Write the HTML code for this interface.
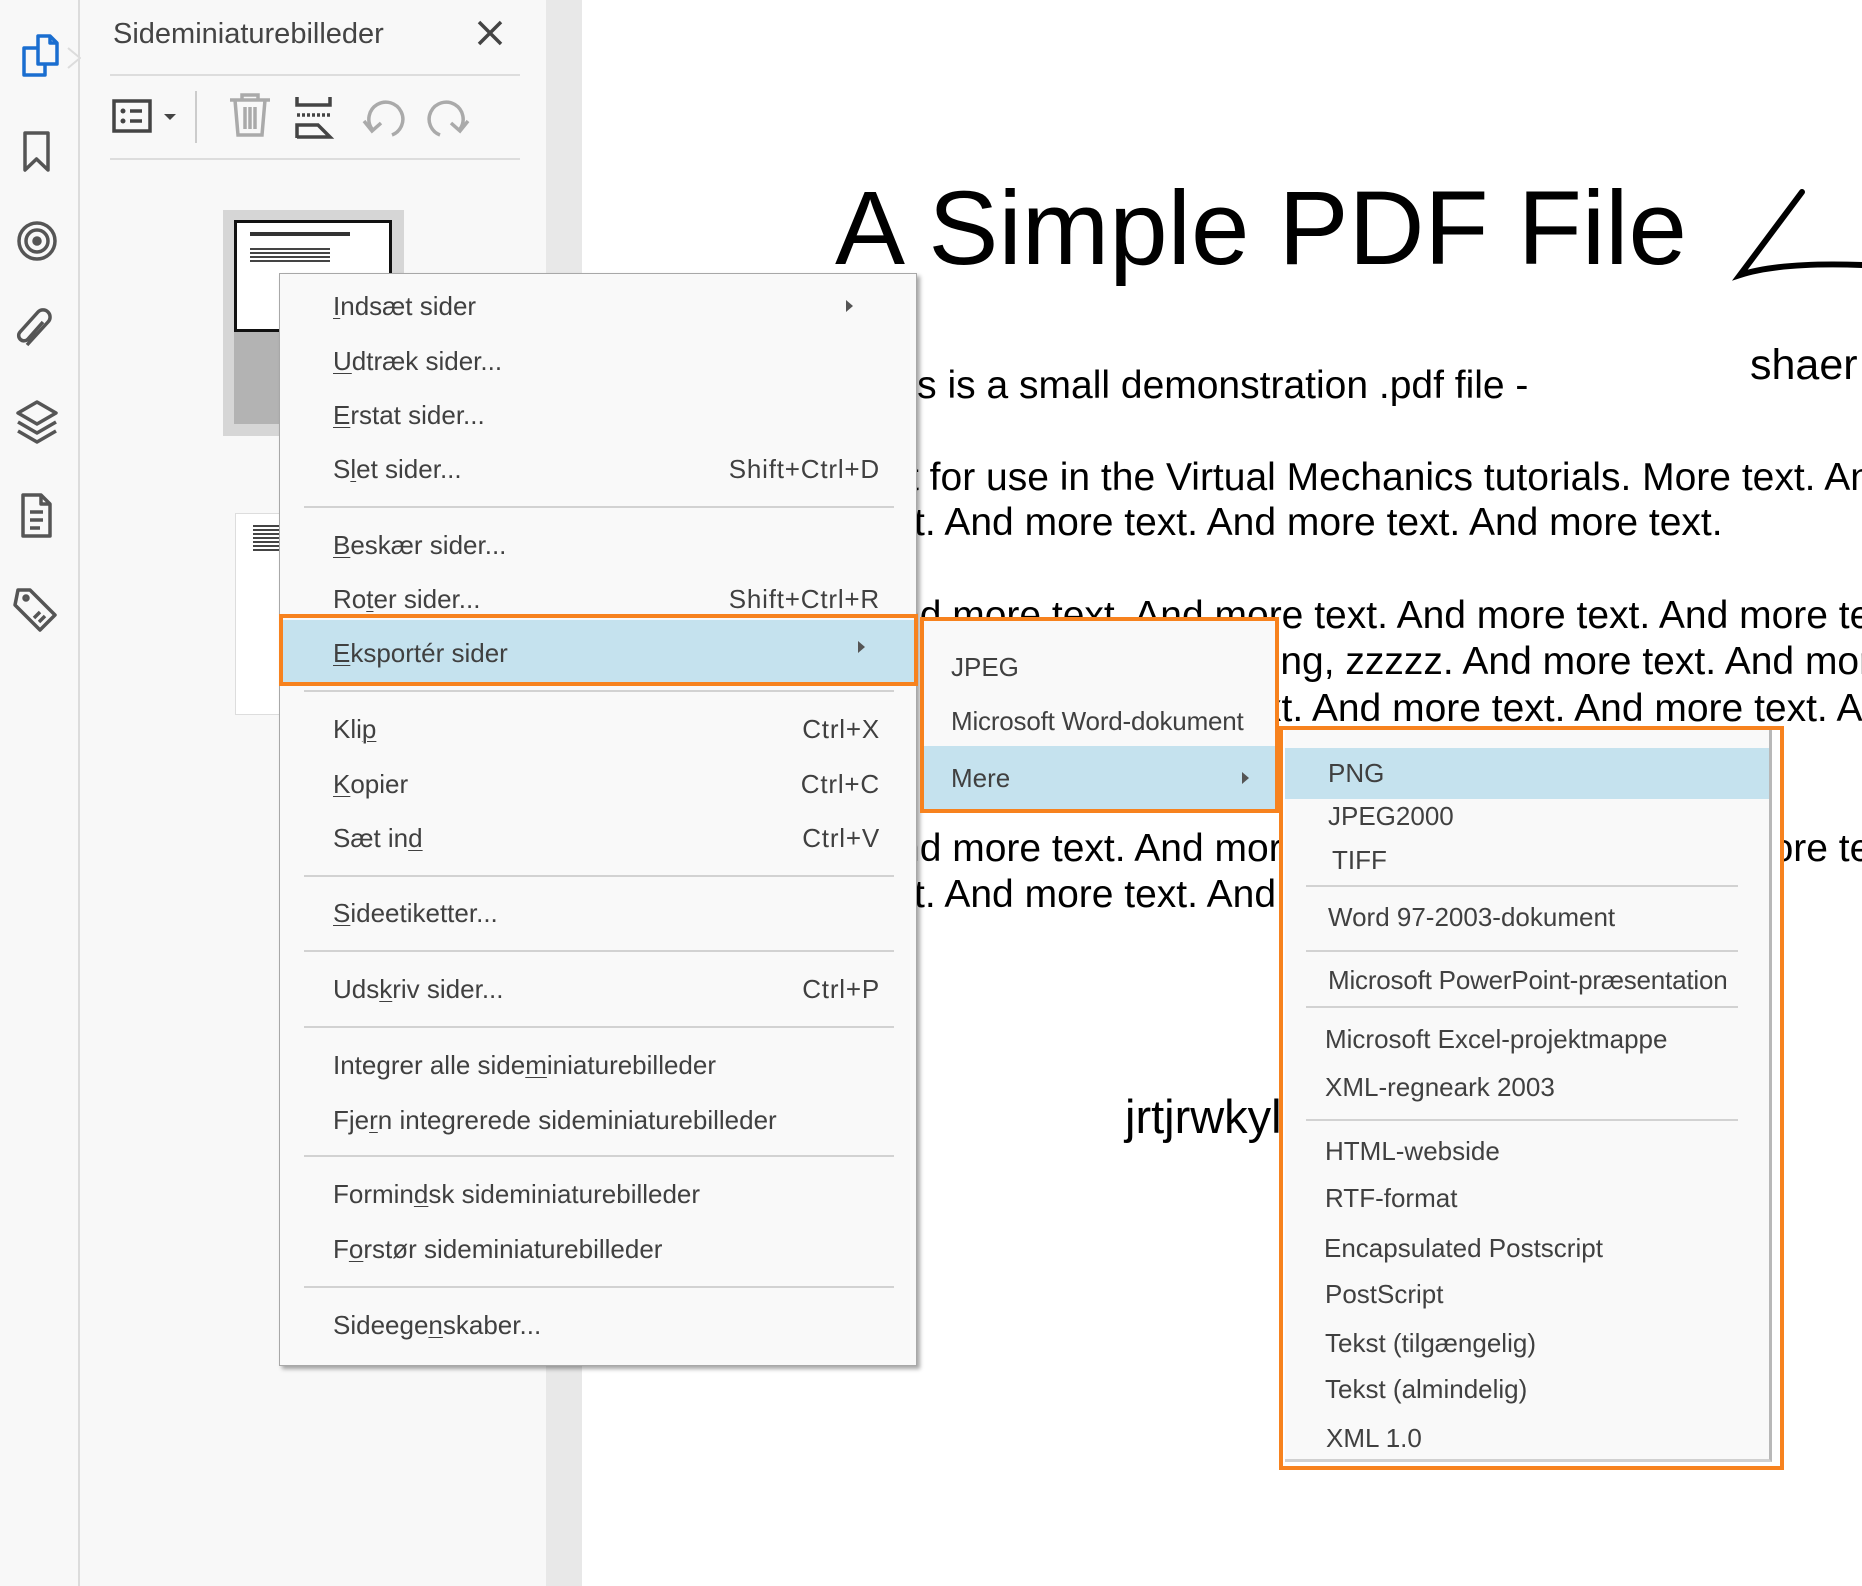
<!DOCTYPE html>
<html><head><meta charset="utf-8"><style>
*{margin:0;padding:0;box-sizing:border-box}
html,body{width:1862px;height:1586px;overflow:hidden}
body{background:#fff;position:relative;font-family:"Liberation Sans",Arial,sans-serif}
.a{position:absolute}
.clip{position:absolute;left:0;top:0;width:1862px;height:1586px;overflow:hidden}
.t{position:absolute;font-size:39px;color:#000;white-space:nowrap;line-height:44px}
.m{position:absolute;font-size:26px;color:#404040;white-space:nowrap;line-height:30px}
.sc{position:absolute;font-size:26px;color:#404040;line-height:30px;text-align:right;right:36px;letter-spacing:0.8px}
.sep{position:absolute;height:2px;background:#d2d2d2}
u{text-decoration-thickness:1px;text-underline-offset:3px}
.arr{position:absolute;width:0;height:0;border-top:6px solid transparent;border-bottom:6px solid transparent;border-left:7px solid #555}
</style></head><body><div class="clip">
<!-- left bar -->
<div class="a" style="left:0;top:0;width:80px;height:1586px;background:#f8f8f8;border-right:2px solid #dcdcdc"></div>
<div class="a" style="left:80px;top:0;width:466px;height:1586px;background:#f8f8f8"></div>
<div class="a" style="left:546px;top:0;width:36px;height:1586px;background:#e8e8e8"></div>
<svg class="a" style="left:0;top:0" width="90" height="640" fill="none" stroke-width="3.5" stroke-linejoin="round">
<path d="M68 48 L80 58 L68 68" stroke="#dcdcdc" stroke-width="2" fill="#f8f8f8"/>
<g stroke="#1a6ed0"><path d="M38 36 H50 L57 43 V64 H38 Z"/><path d="M50 36 V43 H57"/><path d="M38 48 H24 V75 H45 V64"/></g>
<g stroke="#555"><path d="M25 133 H48 V170 L36.5 159 L25 170 Z"/>
<circle cx="37" cy="241" r="18"/><circle cx="37" cy="241" r="11"/><circle cx="37" cy="241" r="3" fill="#555"/>
<path d="M27 345 L48 322 A7 7 0 0 0 38 312 L20 332 A5 5 0 0 0 28 339 L43 322" />
<path d="M37 402 L56 413 L37 424 L18 413 Z"/><path d="M18 422 L37 433 L56 422"/><path d="M18 431 L37 442 L56 431"/>
<path d="M23 495 H41 L50 504 V536 H23 Z"/><path d="M41 495 V504 H50"/><path d="M30 512 H43 M30 520 H43 M30 528 H40"/>
<path d="M18 590 L30 590 L55 615 L40 630 L15 605 Z"/><circle cx="26" cy="598" r="2"/><path d="M40 612 L34 618 M45 616 L39 622"/></g>
</svg>
<!-- panel header -->
<div class="a" style="left:113px;top:17px;font-size:29px;color:#444;line-height:34px">Sideminiaturebilleder</div>
<svg class="a" style="left:476px;top:19px" width="28" height="28" stroke="#444" stroke-width="3.5"><path d="M3 3 L25 25 M25 3 L3 25"/></svg>
<div class="a" style="left:110px;top:74px;width:410px;height:2px;background:#ddd"></div>
<div class="a" style="left:110px;top:158px;width:410px;height:2px;background:#ddd"></div>
<svg class="a" style="left:100px;top:85px" width="380" height="70" fill="none" stroke-width="3.5">
<rect x="14" y="16" width="36" height="30" stroke="#444"/><circle cx="23" cy="26" r="2.5" fill="#444" stroke="none"/><circle cx="23" cy="36" r="2.5" fill="#444" stroke="none"/><path d="M30 26 H42 M30 36 H42" stroke="#444"/>
<path d="M64 29 H76 L70 35 Z" fill="#444" stroke="none"/>
<path d="M96 6 V58" stroke="#ccc" stroke-width="2"/>
<g stroke="#aaa"><path d="M130 15 H170 M142 15 V10 H158 V15 M135 15 L138 50 H162 L165 15 M145 22 V44 M150 22 V44 M155 22 V44"/></g>
<g stroke="#444"><path d="M197 12 V20 H230 V12"/><path d="M197 30 H230" stroke-dasharray="3 2"/><path d="M197 53 V40 H218 L230 52 H197"/></g>
<g stroke="#aaa"><path d="M272 44 A17 17 0 1 1 292 50"/><path d="M264 36 L272 46 L281 38"/>
<path d="M360 44 A17 17 0 1 0 340 50"/><path d="M368 36 L360 46 L351 38"/></g>
</svg>
<!-- thumbnails -->
<div class="a" style="left:223px;top:210px;width:181px;height:226px;background:#d6d6d6"></div>
<div class="a" style="left:234px;top:220px;width:158px;height:112px;background:#fff;border:3px solid #111"></div>
<div class="a" style="left:234px;top:332px;width:158px;height:92px;background:#b3b3b3"></div>
<div class="a" style="left:250px;top:232px;width:100px;height:4px;background:#333"></div>
<div class="a" style="left:250px;top:248px;width:80px;height:14px;background:repeating-linear-gradient(#444 0 2px,#fff 2px 4px)"></div>
<div class="a" style="left:235px;top:513px;width:46px;height:202px;background:#fff;border:1px solid #ddd"></div>
<div class="a" style="left:253px;top:525px;width:26px;height:26px;background:repeating-linear-gradient(#444 0 2px,#fff 2px 4px)"></div>
<!-- PDF content -->
<div class="a" style="left:835px;top:169px;font-size:105px;line-height:120px;color:#000;white-space:nowrap">A Simple PDF File</div>
<svg class="a" style="left:1720px;top:180px" width="142" height="110" fill="none" stroke="#000" stroke-width="6" stroke-linecap="round"><path d="M82 12 L20 95 Q60 82 142 85"/></svg>
<div class="t" style="left:1750px;top:343px;font-size:43px">shaer</div>
<div class="t" style="left:863px;top:364px">This is a small demonstration .pdf file -</div>
<div class="t" style="left:908px;top:456px">t for use in the Virtual Mechanics tutorials. More text. And more text.</div>
<div class="t" style="left:914px;top:501px">t. And more text. And more text. And more text.</div>
<div class="t" style="left:898px;top:594px">nd more text. And more text. And more text. And more text.</div>
<div class="t" style="left:1237px;top:640px">oring, zzzzz. And more text. And more text.</div>
<div class="t" style="left:1262px;top:687px">xt. And more text. And more text. And more text.</div>
<div class="t" style="left:898px;top:827px">nd more text. And more text. And more text. And more text.</div>
<div class="t" style="left:914px;top:873px">t. And more text. And more text. Continued</div>
<div class="t" style="left:1125px;top:1092px;font-size:47px;line-height:50px">jrtjrwkyl</div>
<!-- main menu -->
<div class="a" style="left:279px;top:273px;width:638px;height:1093px;background:#f9f9f9;border:1px solid #a8a8a8;box-shadow:3px 3px 4px rgba(0,0,0,.35)">
<div class="m" style="left:53px;top:17px"><u>I</u>ndsæt sider</div><div class="arr" style="left:566px;top:26px"></div>
<div class="m" style="left:53px;top:72px"><u>U</u>dtræk sider...</div>
<div class="m" style="left:53px;top:126px"><u>E</u>rstat sider...</div>
<div class="m" style="left:53px;top:180px">S<u>l</u>et sider...</div><div class="sc" style="top:180px">Shift+Ctrl+D</div>
<div class="sep" style="left:24px;top:232px;width:590px"></div>
<div class="m" style="left:53px;top:256px"><u>B</u>eskær sider...</div>
<div class="m" style="left:53px;top:310px">Ro<u>t</u>er sider...</div><div class="sc" style="top:310px">Shift+Ctrl+R</div>
<div class="a" style="left:2px;top:346px;width:633px;height:65px;background:#c5e2ee"></div>
<div class="m" style="left:53px;top:364px"><u>E</u>ksportér sider</div><div class="arr" style="left:578px;top:367px"></div>
<div class="sep" style="left:24px;top:416px;width:590px"></div>
<div class="m" style="left:53px;top:440px">Kli<u>p</u></div><div class="sc" style="top:440px">Ctrl+X</div>
<div class="m" style="left:53px;top:495px"><u>K</u>opier</div><div class="sc" style="top:495px">Ctrl+C</div>
<div class="m" style="left:53px;top:549px">Sæt in<u>d</u></div><div class="sc" style="top:549px">Ctrl+V</div>
<div class="sep" style="left:24px;top:601px;width:590px"></div>
<div class="m" style="left:53px;top:624px"><u>S</u>ideetiketter...</div>
<div class="sep" style="left:24px;top:676px;width:590px"></div>
<div class="m" style="left:53px;top:700px">Uds<u>k</u>riv sider...</div><div class="sc" style="top:700px">Ctrl+P</div>
<div class="sep" style="left:24px;top:752px;width:590px"></div>
<div class="m" style="left:53px;top:776px">Integrer alle side<u>m</u>iniaturebilleder</div>
<div class="m" style="left:53px;top:831px">Fje<u>r</u>n integrerede sideminiaturebilleder</div>
<div class="sep" style="left:24px;top:881px;width:590px"></div>
<div class="m" style="left:53px;top:905px">Formin<u>d</u>sk sideminiaturebilleder</div>
<div class="m" style="left:53px;top:960px">F<u>o</u>rstør sideminiaturebilleder</div>
<div class="sep" style="left:24px;top:1012px;width:590px"></div>
<div class="m" style="left:53px;top:1036px">Sideege<u>n</u>skaber...</div>
</div>
<div class="a" style="left:279px;top:614px;width:639px;height:72px;border:4px solid #f7821e"></div>
<!-- submenu 1 -->
<div class="a" style="left:920px;top:617px;width:359px;height:196px;background:#f9f9f9;border:4px solid #f7821e">
<div class="a" style="left:0;top:125px;width:351px;height:63px;background:#c5e2ee"></div>
<div class="m" style="left:27px;top:31px">JPEG</div>
<div class="m" style="left:27px;top:85px;letter-spacing:-0.2px">Microsoft Word-dokument</div>
<div class="m" style="left:27px;top:142px">Mere</div><div class="arr" style="left:318px;top:151px"></div>
</div>
<!-- submenu 2 -->
<div class="a" style="left:1279px;top:726px;width:505px;height:744px;border:4px solid #f7821e;background:#fff">
<div class="a" style="left:2px;top:0;width:487px;height:732px;background:#f9f9f9;border-right:3px solid #b8b8b8;border-bottom:3px solid #d0d0d0"></div>
<div class="a" style="left:2px;top:18px;width:484px;height:51px;background:#c5e2ee"></div>
<div class="m" style="left:45px;top:28px">PNG</div>
<div class="m" style="left:45px;top:71px">JPEG2000</div>
<div class="m" style="left:49px;top:115px">TIFF</div>
<div class="sep" style="left:23px;top:155px;width:432px"></div>
<div class="m" style="left:45px;top:172px">Word 97-2003-dokument</div>
<div class="sep" style="left:23px;top:220px;width:432px"></div>
<div class="m" style="left:45px;top:235px;letter-spacing:-0.2px">Microsoft PowerPoint-præsentation</div>
<div class="sep" style="left:23px;top:276px;width:432px"></div>
<div class="m" style="left:42px;top:294px">Microsoft Excel-projektmappe</div>
<div class="m" style="left:42px;top:342px">XML-regneark 2003</div>
<div class="sep" style="left:23px;top:389px;width:432px"></div>
<div class="m" style="left:42px;top:406px">HTML-webside</div>
<div class="m" style="left:42px;top:453px">RTF-format</div>
<div class="m" style="left:41px;top:503px">Encapsulated Postscript</div>
<div class="m" style="left:42px;top:549px">PostScript</div>
<div class="m" style="left:42px;top:598px">Tekst (tilgængelig)</div>
<div class="m" style="left:42px;top:644px">Tekst (almindelig)</div>
<div class="m" style="left:43px;top:693px">XML 1.0</div>
</div>
</div></body></html>
